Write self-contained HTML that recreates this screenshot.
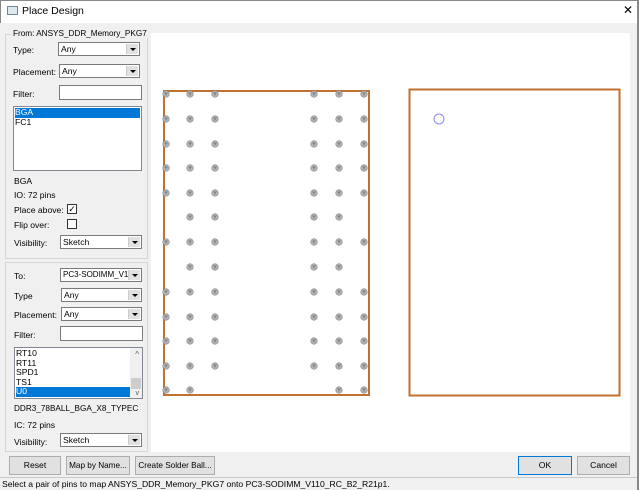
<!DOCTYPE html>
<html><head><style>
*{box-sizing:border-box;margin:0;padding:0;white-space:nowrap}
body{width:639px;height:490px;background:#f0f0f0;font-family:"Liberation Sans",sans-serif;font-size:8.6px;color:#000;position:relative;overflow:hidden}
.a{position:absolute}
.title{left:0;top:0;width:639px;height:23px;background:#fff;border-left:1px solid #888;border-right:1px solid #888;border-top:1px solid #888}
.grp{border:1px solid #d5d5d5;position:absolute}
.combo{position:absolute;height:14px;background:#fff;border:1px solid #7a7a7a;padding-left:2px;line-height:12px;overflow:hidden}
.combo:after{content:"";position:absolute;right:1px;top:1px;width:11px;height:10px;background:#e1e1e1;border-left:1px solid #ccc}
.combo i{position:absolute;right:3px;top:5px;width:0;height:0;border-left:3px solid transparent;border-right:3px solid transparent;border-top:3px solid #000;z-index:2}
.edit{position:absolute;height:15px;background:#fff;border:1px solid #7a7a7a}
.list{position:absolute;background:#fff;border:1px solid #828790;line-height:9.5px;padding:1px}
.sel{background:#0078d7;color:#fff}
.btn{position:absolute;height:19px;background:#e1e1e1;border:1px solid #adadad;text-align:center;line-height:17px;overflow:hidden}
.cb{position:absolute;width:10px;height:10px;border:1px solid #333;background:#fff;font-size:9px;line-height:8px;text-align:center}
</style></head><body>
<div class="a title"></div>
<div class="a" style="left:7px;top:6px;width:11px;height:9px;border:1px solid #6a8a9a;background:#dfe8ee"></div>
<div class="a" style="left:22px;top:5px;font-size:10.5px">Place Design</div>
<div class="a" style="left:623px;top:3px;font-size:12px">✕</div>

<div class="grp" style="left:5px;top:34px;width:143px;height:225px"></div>
<div class="a" style="left:11px;top:29px;background:#f0f0f0;padding:0 2px;font-size:8.2px">From: ANSYS_DDR_Memory_PKG7</div>
<div class="a" style="left:13px;top:45px">Type:</div>
<div class="combo" style="left:58px;top:42px;width:82px">Any<i></i></div>
<div class="a" style="left:13px;top:67px">Placement:</div>
<div class="combo" style="left:59px;top:64px;width:81px">Any<i></i></div>
<div class="a" style="left:13px;top:89px">Filter:</div>
<div class="edit" style="left:59px;top:85px;width:83px"></div>
<div class="list" style="left:13px;top:106px;width:129px;height:65px"><div class="sel">BGA</div><div>FC1</div></div>
<div class="a" style="left:14px;top:176px">BGA</div>
<div class="a" style="left:14px;top:190px">IO: 72 pins</div>
<div class="a" style="left:14px;top:205px">Place above:</div>
<div class="cb" style="left:67px;top:204px">✓</div>
<div class="a" style="left:14px;top:220px">Flip over:</div>
<div class="cb" style="left:67px;top:219px"></div>
<div class="a" style="left:14px;top:238px">Visibility:</div>
<div class="combo" style="left:60px;top:235px;width:82px">Sketch<i></i></div>

<div class="grp" style="left:5px;top:262px;width:143px;height:190px"></div>
<div class="a" style="left:14px;top:271px">To:</div>
<div class="combo" style="left:60px;top:268px;width:82px;font-size:8px">PC3-SODIMM_V110<i></i></div>
<div class="a" style="left:14px;top:291px">Type</div>
<div class="combo" style="left:61px;top:288px;width:81px">Any<i></i></div>
<div class="a" style="left:14px;top:310px">Placement:</div>
<div class="combo" style="left:61px;top:307px;width:81px">Any<i></i></div>
<div class="a" style="left:14px;top:330px">Filter:</div>
<div class="edit" style="left:60px;top:326px;width:83px"></div>
<div class="list" style="left:14px;top:347px;width:129px;height:52px;overflow:hidden;padding:1px 0 0 1px">
<div>RT10</div><div>RT11</div><div>SPD1</div><div>TS1</div><div class="sel" style="width:114px">U0</div><div>U2</div>
<div style="position:absolute;right:0;top:0;width:12px;height:50px;background:#f0f0f0"></div>
<div style="position:absolute;right:1px;top:30px;width:10px;height:11px;background:#cdcdcd"></div>
<div style="position:absolute;right:3px;top:2px;font-size:8px;color:#555">^</div>
<div style="position:absolute;right:3px;bottom:0;font-size:7px;color:#555">v</div>
</div>
<div class="a" style="left:14px;top:404px;font-size:8.2px">DDR3_78BALL_BGA_X8_TYPEC</div>
<div class="a" style="left:14px;top:420px">IC: 72 pins</div>
<div class="a" style="left:14px;top:437px">Visibility:</div>
<div class="combo" style="left:60px;top:433px;width:82px">Sketch<i></i></div>

<div class="a" style="left:151px;top:33px;width:479px;height:419px;background:#fff"></div>
<svg class="a" style="left:0;top:0" width="639" height="490">
<rect x="164" y="91" width="205" height="304" fill="none" stroke="#c0702f" stroke-width="2"/>
<rect x="409.5" y="89.5" width="210" height="306" fill="none" stroke="#c0702f" stroke-width="2"/>
<circle cx="439" cy="119" r="5" fill="none" stroke="#8a8af0" stroke-width="1"/>
</svg>
<svg class="a" style="left:0;top:0" width="639" height="490" id="p"></svg>
<script>
var rows=[94,119,144,168,193,217,242,267,292,317,341,366,390],cols=[166,190,215,314,339,364],s='';
rows.forEach(function(y,i){cols.forEach(function(x,j){
if((i==5||i==7)&&(j==0||j==5))return;
if(i==12&&(j==2||j==3))return;
s+='<circle cx="'+x+'" cy="'+y+'" r="3.3" fill="#b4b4b4" stroke="#8a8a8a" stroke-width="0.6"/><path d="M'+(x-1.5)+' '+(y-1)+'h3M'+x+' '+(y-1)+'v2.5" stroke="#666" stroke-width="0.7"/>';});});
document.getElementById('p').innerHTML=s;
</script>

<div class="btn" style="left:9px;top:456px;width:52px">Reset</div>
<div class="btn" style="left:66px;top:456px;width:64px;font-size:8.2px">Map by Name...</div>
<div class="btn" style="left:135px;top:456px;width:80px;font-size:8.2px">Create Solder Ball...</div>
<div class="btn" style="left:518px;top:456px;width:54px;border-color:#0078d7">OK</div>
<div class="btn" style="left:577px;top:456px;width:53px">Cancel</div>
<div class="a" style="left:0;top:477px;width:639px;height:13px;border-top:1px solid #c8c8c8;background:#f0f0f0;padding-left:2px;line-height:12px">Select a pair of pins to map ANSYS_DDR_Memory_PKG7 onto PC3-SODIMM_V110_RC_B2_R21p1.</div>
<div class="a" style="left:637px;top:0;width:2px;height:490px;background:#888"></div>
</body></html>
